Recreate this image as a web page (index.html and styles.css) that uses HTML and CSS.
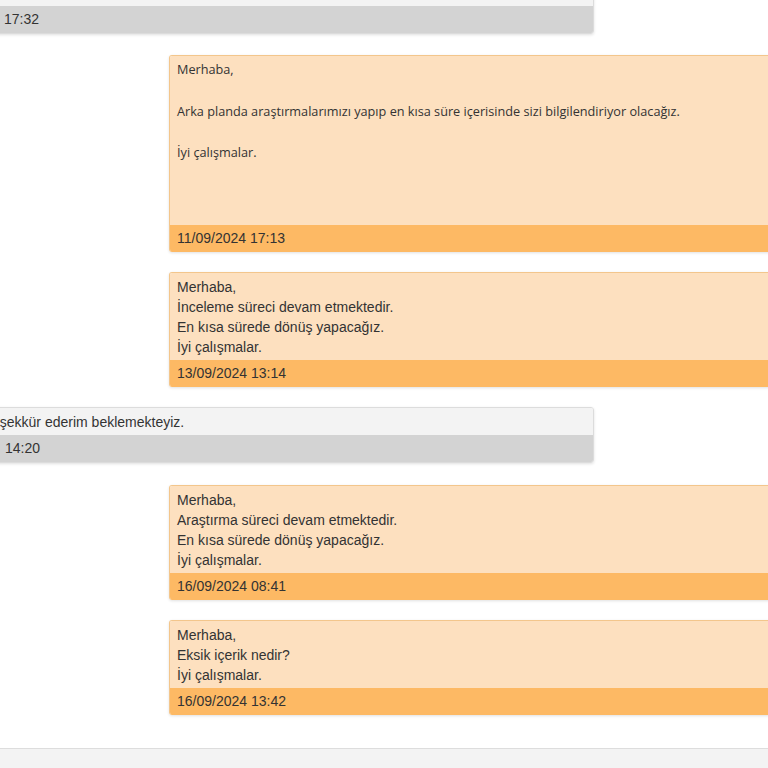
FILE: index.html
```html
<!DOCTYPE html>
<html lang="tr">
<head>
<meta charset="utf-8"/>
<meta content="width=device-width, initial-scale=1.0" name="viewport"/>
<title>Destek Talebi - Mesajlar</title>
<link rel="stylesheet" href="styles.css">
</head>
<body>
<div class="panel">
<div class="thread">
    <div class="msg msg-in msg-first">
        <div class="msg-body"></div>
        <div class="msg-date">11/09/2024 17:32</div>
    </div>

    <div class="msg msg-out">
        <div class="msg-body msg-rich">
            <p>Merhaba,</p>
            <p>Arka planda araştırmalarımızı yapıp en kısa süre içerisinde sizi bilgilendiriyor olacağız.</p>
            <p>İyi çalışmalar.</p>
        </div>
        <div class="msg-date">11/09/2024 17:13</div>
    </div>

    <div class="msg msg-out">
        <div class="msg-body">Merhaba,<br>İnceleme süreci devam etmektedir.<br>En kısa sürede dönüş yapacağız.<br>İyi çalışmalar.</div>
        <div class="msg-date">13/09/2024 13:14</div>
    </div>

    <div class="msg msg-in">
        <div class="msg-body">Teşekkür ederim beklemekteyiz.</div>
        <div class="msg-date">13/09/2024 14:20</div>
    </div>

    <div class="msg msg-out">
        <div class="msg-body">Merhaba,<br>Araştırma süreci devam etmektedir.<br>En kısa sürede dönüş yapacağız.<br>İyi çalışmalar.</div>
        <div class="msg-date">16/09/2024 08:41</div>
    </div>

    <div class="msg msg-out">
        <div class="msg-body">Merhaba,<br>Eksik içerik nedir?<br>İyi çalışmalar.</div>
        <div class="msg-date">16/09/2024 13:42</div>
    </div>
</div>
</div>
<div class="reply-bar"></div>
</body>
</html>
```

FILE: styles.css
```css
/* Mesaj listesi */
body {
    margin: 0;
    font-family: "Liberation Sans", Arial, sans-serif;
    font-size: 14px;
    color: #333;
    background-color: #fff;
    overflow: hidden;
}

.panel {
    height: 748px;
    overflow: hidden;
    border-bottom: 1px solid #ddd;
}

.thread {
    display: flex;
    flex-direction: column;
    gap: 20px;
    width: 1000px;
    margin-left: -78px;
    margin-top: -22px;
}

.msg {
    border-radius: 3px;
    box-shadow: 0 1px 3px rgba(0, 0, 0, 0.12);
    overflow: hidden;
}

.msg-body {
    padding: 4px 7px 3px;
    line-height: 20px;
}

.msg-date {
    padding: 0 7px;
    height: 27px;
    line-height: 27px;
}

/* gelen mesajlar */
.msg-in {
    width: 670px;
    border: 1px solid #dcdcdc;
    margin-bottom: 2px;
}

.msg-in .msg-body {
    background-color: #f3f3f3;
    padding-left: 62px;
}

.msg-in .msg-date {
    background-color: #d3d3d3;
    padding-left: 4px;
    word-spacing: 4px;
}

.msg-first {
    margin-bottom: 1px;
}

.msg-first .msg-body {
    height: 27px;
    padding: 0;
}

/* giden mesajlar */
.msg-out {
    margin-left: 247px;
    width: 700px;
    border: 1px solid #f3c68c;
    border-bottom: 0;
}

.msg-out .msg-body {
    background-color: #fde0bf;
}

.msg-out .msg-date {
    background-color: #fdb964;
}

.msg-rich {
    font-family: "Open Sans", sans-serif;
    font-size: 12.7px;
    line-height: 20.8px;
    min-height: 163px;
    padding-top: 3px;
}

.msg-rich p {
    margin: 0 0 20.8px;
}

.reply-bar {
    height: 20px;
    background-color: #f3f3f3;
}
```
